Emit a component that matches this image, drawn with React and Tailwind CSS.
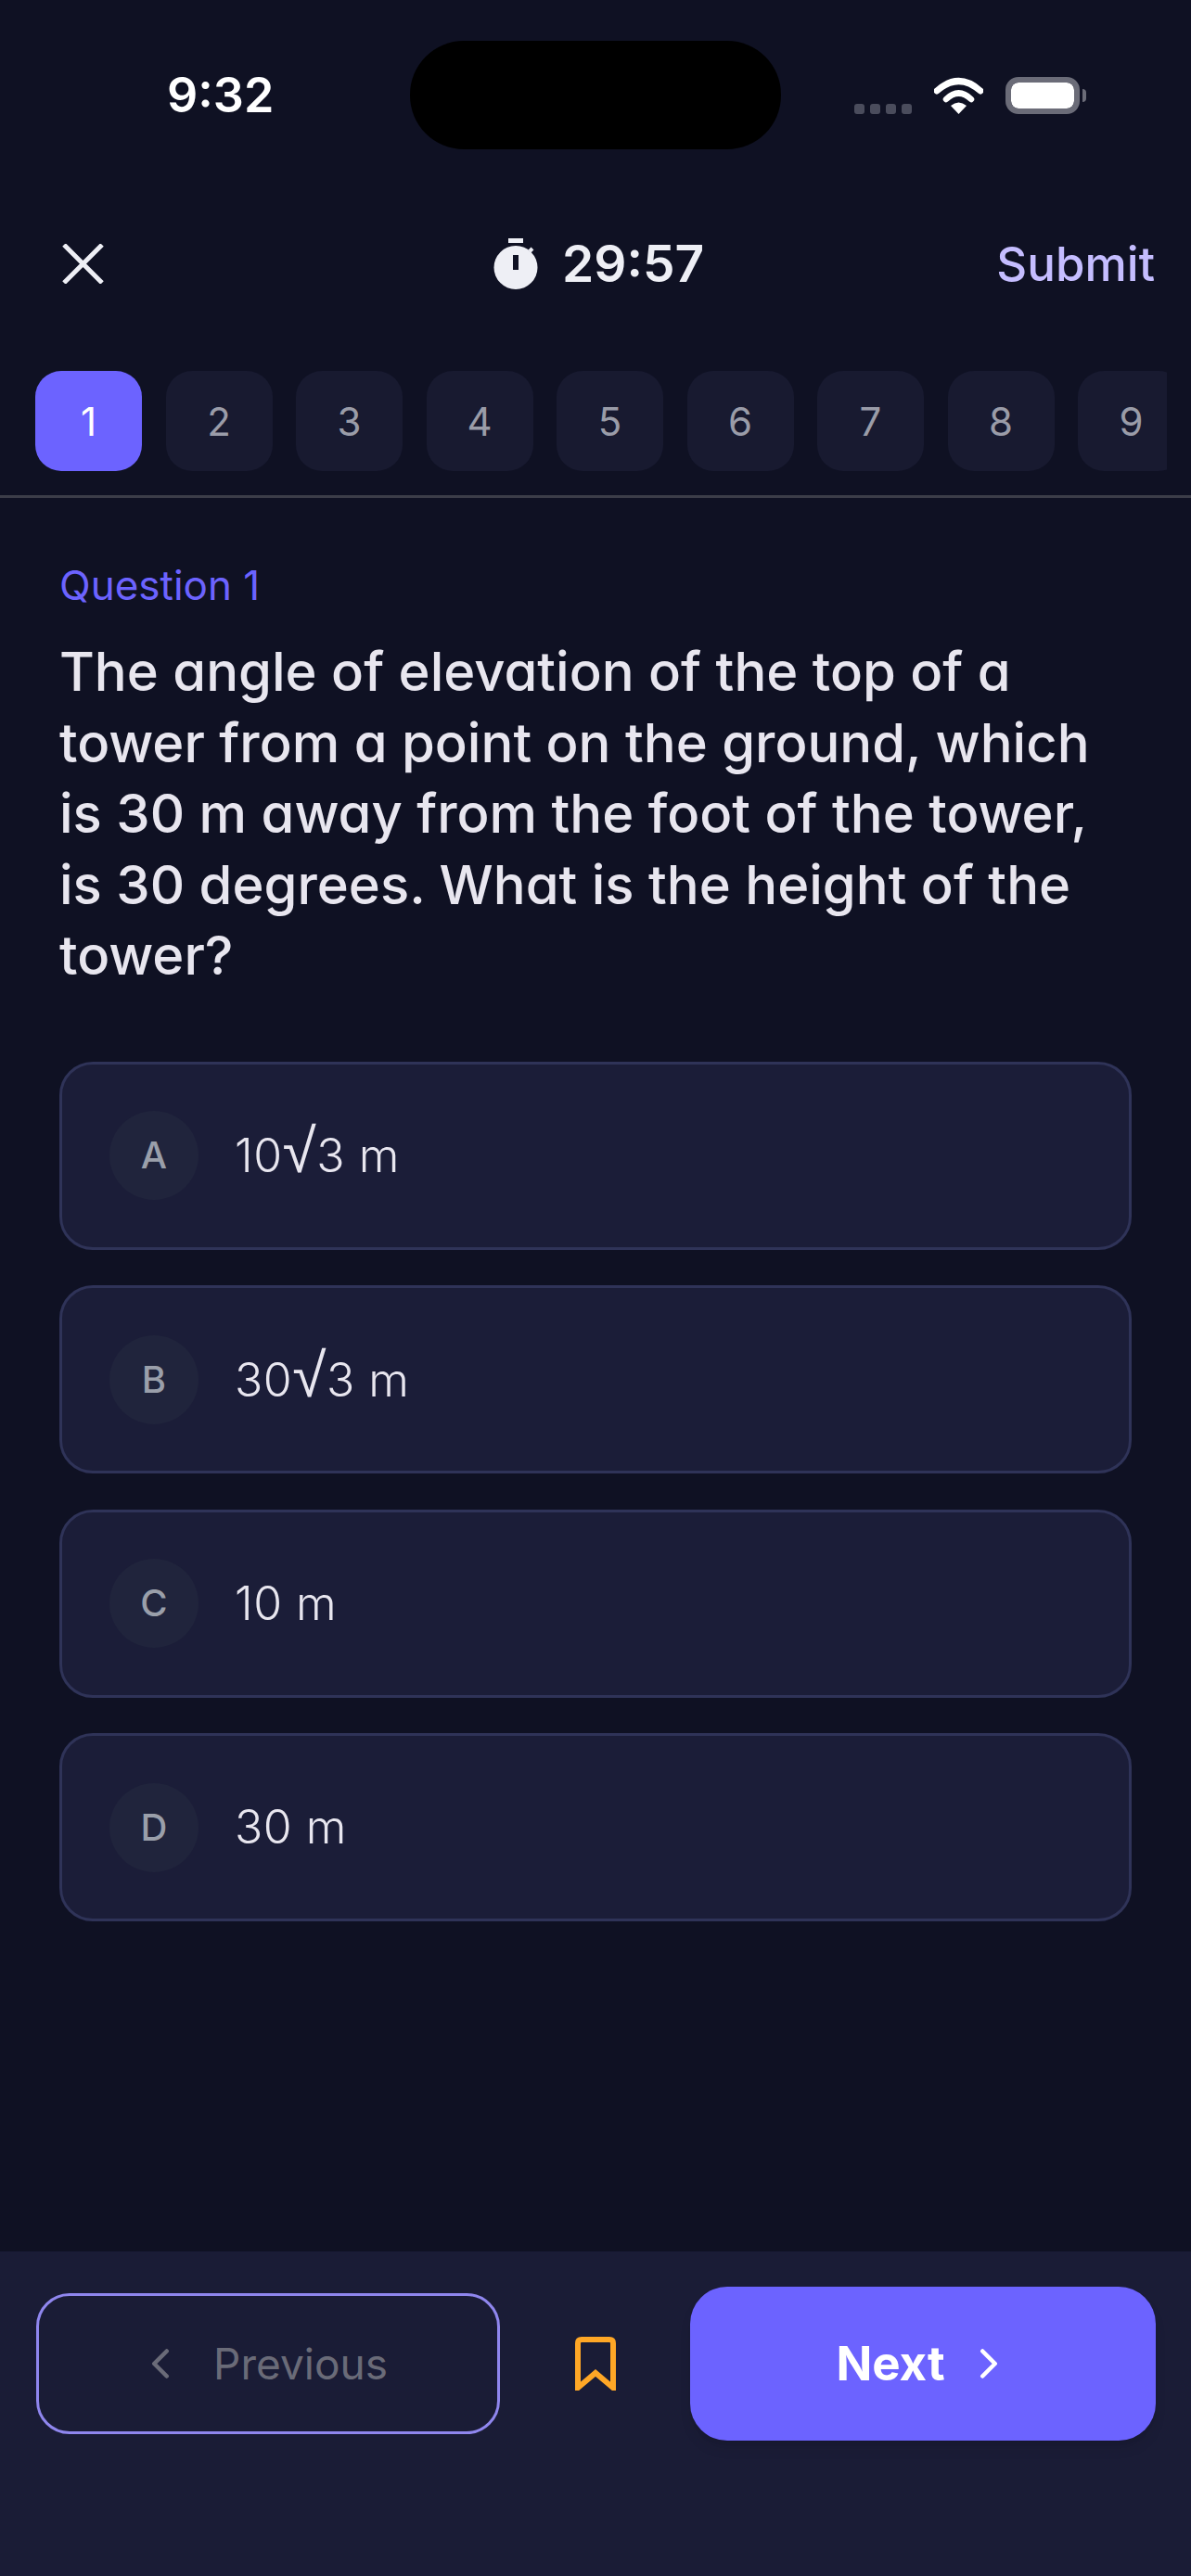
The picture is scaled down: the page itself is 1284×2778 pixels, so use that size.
import React from 'react';
import { ChevronLeft, ChevronRight } from 'lucide-react';

const tabs = [1, 2, 3, 4, 5, 6, 7, 8, 9];

const options = [
  { key: 'A', before: '10', after: '3 m' },
  { key: 'B', before: '30', after: '3 m' },
  { key: 'C', before: '10 m' },
  { key: 'D', before: '30 m' },
];

const StatusBar = () => (
  <div className="flex h-[161px] shrink-0 pt-[44px]">
    <span className="ml-[180px] mt-[28px] w-[262px] text-[52px] leading-[62px] font-semibold text-white font-['Inter'] [font-feature-settings:normal]">9:32</span>
    {/* Dynamic island */}
    <div className="h-[117px] w-[400px] rounded-[58px] bg-black" />
    <div className="ml-[79px] mt-[39px] flex h-[40px] items-start">
      <div className="mt-[29px] flex gap-[6px]">
        {[0, 1, 2, 3].map((i) => (
          <span key={i} className="h-[11px] w-[11px] rounded-[3px] bg-[#4a4c5c]" />
        ))}
      </div>
      <svg className="ml-[24px]" width="53" height="40" viewBox="0 0 53 40" fill="none">
        <path d="M3 15 Q26.5 -6 50 15" stroke="#fff" strokeWidth="7" strokeLinecap="round" />
        <path d="M13 24 Q26.5 11 40 24" stroke="#fff" strokeWidth="6.5" strokeLinecap="round" />
        <path d="M18 31 Q26.5 24 35 31 L26.5 40 Z" fill="#fff" />
      </svg>
      <div className="ml-[24px] flex h-[40px] w-[80px] rounded-[14px] border-[6px] border-[#6b6c78] bg-white bg-clip-content" />
      <div className="ml-[3px] mt-[13px] h-[14px] w-[4px] rounded-r-full bg-[#6b6c78]" />
    </div>
  </div>
);

const Header = () => (
  <div className="mt-[96px] flex h-[55px] shrink-0 items-center pl-[67px] pr-[39px]">
    <svg width="45" height="43" viewBox="0 0 45 43" fill="none">
      <path d="M2 1 L43 42 M43 1 L2 42" stroke="#eeeff5" strokeWidth="5" />
    </svg>
    <svg className="ml-[420px]" width="48" height="55" viewBox="0 0 48 55" fill="none">
      <rect x="16" y="0" width="16" height="5" fill="#eeeff5" />
      <circle cx="24" cy="31.5" r="23.5" fill="#eeeff5" />
      <path d="M39 14 L42 11" stroke="#eeeff5" strokeWidth="4" />
      <rect x="21" y="18" width="6" height="16" fill="#0f1123" />
    </svg>
    <span className="ml-[26px] text-[55px] leading-[55px] font-semibold text-[#eeeff5] font-['Inter'] [font-feature-settings:normal]">29:57</span>
    <span className="ml-auto text-[51px] leading-[55px] font-medium text-[#c5bdff]">Submit</span>
  </div>
);

const QuestionTabs = () => (
  <div className="mt-[88px] shrink-0 border-b-[3px] border-[#3c3d48] pb-[26px]">
    <div className="ml-[38px] flex w-[1220px] gap-[25.5px] overflow-hidden">
      {tabs.map((n) => (
        <div
          key={n}
          className={`flex h-[108px] w-[115px] shrink-0 items-center justify-center rounded-[28px] text-[42px] ${
            n === 1 ? 'bg-[#6c63ff] text-white' : 'bg-[#181a30] text-[#9a9ca8]'
          }`}
        >
          {n}
        </div>
      ))}
    </div>
  </div>
);

const Option = ({ letter, before, after }) => (
  <div className="flex h-[203px] items-center rounded-[36px] border-[3px] border-[#2f3358] bg-[#1b1d38] pl-[51px]">
    <div className="flex h-[96px] w-[96px] items-center justify-center rounded-full bg-[#20243c] text-[40px] font-medium text-[#9a9faa]">
      {letter}
    </div>
    <span className="ml-[39px] text-[50px] font-light tracking-[0.5px] text-[#e8e6ef]">
      {before}
      {after && <span className="font-['Liberation_Sans'] text-[66px] leading-none">√</span>}
      {after}
    </span>
  </div>
);

const Footer = () => (
  <div className="flex h-[350px] shrink-0 items-start bg-[#1a1c36] pl-[39px] pt-[38px]">
    <button className="mt-[7px] flex h-[152px] w-[500px] items-center justify-center rounded-[36px] border-[3px] border-[#8f86ee] pr-[14px] text-[46px] text-[#6a6b78]">
      <ChevronLeft className="mr-[30px] h-[54px] w-[54px]" strokeWidth={2} />
      <span>Previous</span>
    </button>
    <svg className="ml-[81px] mt-[54px]" width="44" height="58" viewBox="0 0 44 58" fill="none">
      <path d="M3 55 V7 Q3 3 7 3 H37 Q41 3 41 7 V55 L22 39 Z" stroke="#ffa726" strokeWidth="6" />
    </svg>
    <button className="ml-[80px] flex h-[166px] w-[502px] items-center justify-center rounded-[40px] bg-[#6c63ff] pl-[4px] text-[51px] font-bold text-white shadow-lg">
      <span>Next</span>
      <ChevronRight className="ml-[20px] h-[54px] w-[54px]" strokeWidth={2} />
    </button>
  </div>
);

export default function App() {
  return (
    <div className="flex h-[2778px] w-[1284px] flex-col overflow-hidden bg-[#0f1123] font-['Inter',sans-serif] [font-feature-settings:'cv11']">
      <StatusBar />
      <Header />
      <QuestionTabs />
      <main className="flex-1 px-[64px] pt-[64px]">
        <p className="text-[44px] leading-[60px] text-[#6c63ff]">Question 1</p>
        <h1 className="mt-[25px] text-[58px] leading-[76.5px] font-medium text-[#e8e6ef]">
          The angle of elevation of the top of a tower from a point on the ground, which is 30 m away from the foot of the tower, is 30 degrees. What is the height of the tower?
        </h1>
        <div className="mt-[76px] flex flex-col gap-[38.5px]">
          {options.map((o) => (
            <Option key={o.key} letter={o.key} before={o.before} after={o.after} />
          ))}
        </div>
      </main>
      <Footer />
    </div>
  );
}
